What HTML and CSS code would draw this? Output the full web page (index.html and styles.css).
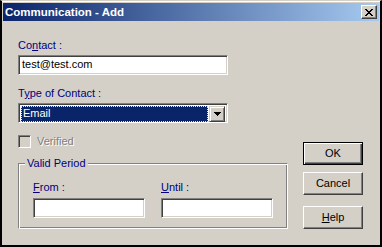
FILE: index.html
```html
<!DOCTYPE html>
<html>
<head>
<meta charset="utf-8">
<title>Communication - Add</title>
<link rel="stylesheet" href="styles.css">
</head>
<body>
<div class="window">
  <div class="titlebar">
    <span class="title">Communication - Add</span>
    <span class="close"><svg width="8" height="7" viewBox="0 0 8 7" shape-rendering="crispEdges"><path d="M0 0h2v1h-2z M6 0h2v1h-2z M1 1h2v1h-2z M5 1h2v1h-2z M2 2h4v1h-4z M3 3h2v1h-2z M2 4h4v1h-4z M1 5h2v1h-2z M5 5h2v1h-2z M0 6h2v1h-2z M6 6h2v1h-2z" fill="#000"/></svg></span>
  </div>
  <div class="content">
    <div class="left">
      <span class="lbl">Co<u>n</u>tact :</span>
      <div class="field wide">test@test.com</div>
      <span class="lbl lbl-gap">T<u>y</u>pe of Contact :</span>
      <div class="select">
        <span class="sel-value">Email</span>
        <span class="sel-btn"><svg width="7" height="4" viewBox="0 0 7 4" shape-rendering="crispEdges"><path d="M0 0h7v1h-7z M1 1h5v1h-5z M2 2h3v1h-3z M3 3h1v1h-1z" fill="#000"/></svg></span>
      </div>
      <div class="check-row">
        <span class="checkbox"></span>
        <span class="disabled">Verified</span>
      </div>
      <div class="group">
        <span class="legend">Valid Period</span>
        <div class="group-cols">
          <div class="col">
            <span class="lbl"><u>F</u>rom :</span>
            <div class="field narrow"></div>
          </div>
          <div class="col">
            <span class="lbl"><u>U</u>ntil :</span>
            <div class="field narrow"></div>
          </div>
        </div>
      </div>
    </div>
    <div class="right">
      <div class="btn default">OK</div>
      <div class="btn cancel">Cancel</div>
      <div class="btn help"><u>H</u>elp</div>
    </div>
  </div>
</div>
</body>
</html>
```

FILE: styles.css
```css
* { box-sizing: border-box; }
html, body { margin: 0; padding: 0; background: #000; }
body {
  font-family: "Liberation Sans", Arial, sans-serif;
  font-size: 11px;
  color: #000;
}
.window {
  width: 382px;
  height: 247px;
  background: #d4d0c8;
  border-style: solid;
  border-width: 1px 2px 2px 2px;
  border-color: #d4d0c8 #000 #000 #000;
  padding: 2px 1px 0 1px;
  box-shadow: inset 0 1px #fff;
  display: flex;
  flex-direction: column;
}
.titlebar {
  height: 18px;
  background: linear-gradient(to right, #0a246a, #a6caf0);
  display: flex;
  align-items: center;
  justify-content: space-between;
  padding: 0 2px 0 2px;
}
.title {
  color: #fff;
  font-weight: bold;
  font-size: 11.5px;
  line-height: 14px;
}
.close {
  width: 16px;
  height: 14px;
  background: #d4d0c8;
  border: 1px solid;
  border-color: #fff #404040 #404040 #fff;
  box-shadow: inset -1px -1px #808080;
  display: flex;
  align-items: center;
  justify-content: center;
  padding-left: 0;
}
.content {
  display: flex;
  padding: 18px 0 0 15px;
  gap: 15px;
}
.left { width: 270px; }
.lbl {
  display: block;
  line-height: 13px;
  height: 13px;
  color: #000080;
  margin-bottom: 3px;
}
.lbl-gap { margin-top: 12px; }
.field {
  height: 20px;
  background: #fff;
  border: 1px solid;
  border-color: #808080 #fff #fff #808080;
  box-shadow: inset 1px 1px #404040, inset -1px -1px #d4d0c8;
  line-height: 14px;
  padding: 1px 2px 0 3px;
  white-space: nowrap;
}
.wide { width: 210px; }
.narrow { width: 112px; }
.select {
  width: 210px;
  height: 20px;
  background: #fff;
  border: 1px solid;
  border-color: #808080 #fff #fff #808080;
  box-shadow: inset 1px 1px #404040, inset -1px -1px #d4d0c8;
  padding: 2px;
  display: flex;
  gap: 1px;
}
.sel-value {
  width: 189px;
  height: 16px;
  background: #0a246a;
  color: #fff;
  line-height: 14px;
  padding: 0 2px;
  outline: 1px dotted #f2e6a4;
  outline-offset: -1px;
}
.sel-btn {
  width: 16px;
  height: 16px;
  background: #d4d0c8;
  border: 1px solid;
  border-color: #d4d0c8 #404040 #404040 #d4d0c8;
  box-shadow: inset 1px 1px #fff, inset -1px -1px #808080;
  display: flex;
  align-items: center;
  justify-content: center;
}
.check-row {
  margin-top: 12px;
  display: flex;
  align-items: center;
  gap: 6px;
  height: 13px;
  line-height: 13px;
}
.checkbox {
  width: 13px;
  height: 13px;
  background: #d4d0c8;
  border: 1px solid;
  border-color: #808080 #fff #fff #808080;
  box-shadow: inset 1px 1px #404040, inset -1px -1px #d4d0c8;
}
.disabled {
  color: #808080;
  text-shadow: 1px 1px #fff;
}
.group {
  position: relative;
  margin-top: 15px;
  height: 66px;
  border: 1px solid;
  border-color: #808080 #fff #fff #808080;
  box-shadow: inset 1px 1px #fff, inset -1px -1px #808080;
  padding: 17px 14px 0 14px;
}
.legend {
  position: absolute;
  top: -7px;
  left: 6px;
  padding: 0 2px;
  background: #d4d0c8;
  color: #000080;
  line-height: 13px;
}
.group-cols {
  display: flex;
  gap: 16px;
}
.group .lbl { margin-bottom: 4px; }
.right {
  display: flex;
  flex-direction: column;
  justify-content: flex-end;
}
.btn {
  width: 60px;
  height: 23px;
  background: #d4d0c8;
  border: 1px solid;
  border-color: #fff #404040 #404040 #fff;
  box-shadow: inset -1px -1px #808080;
  text-align: center;
  line-height: 21px;
}
.btn.default {
  border-color: #000;
  box-shadow: inset 1px 1px #fff, inset -1px -1px #404040, inset -2px -2px #808080;
}
.btn.cancel { margin-top: 7px; }
.btn.help { margin-top: 11px; }
```
